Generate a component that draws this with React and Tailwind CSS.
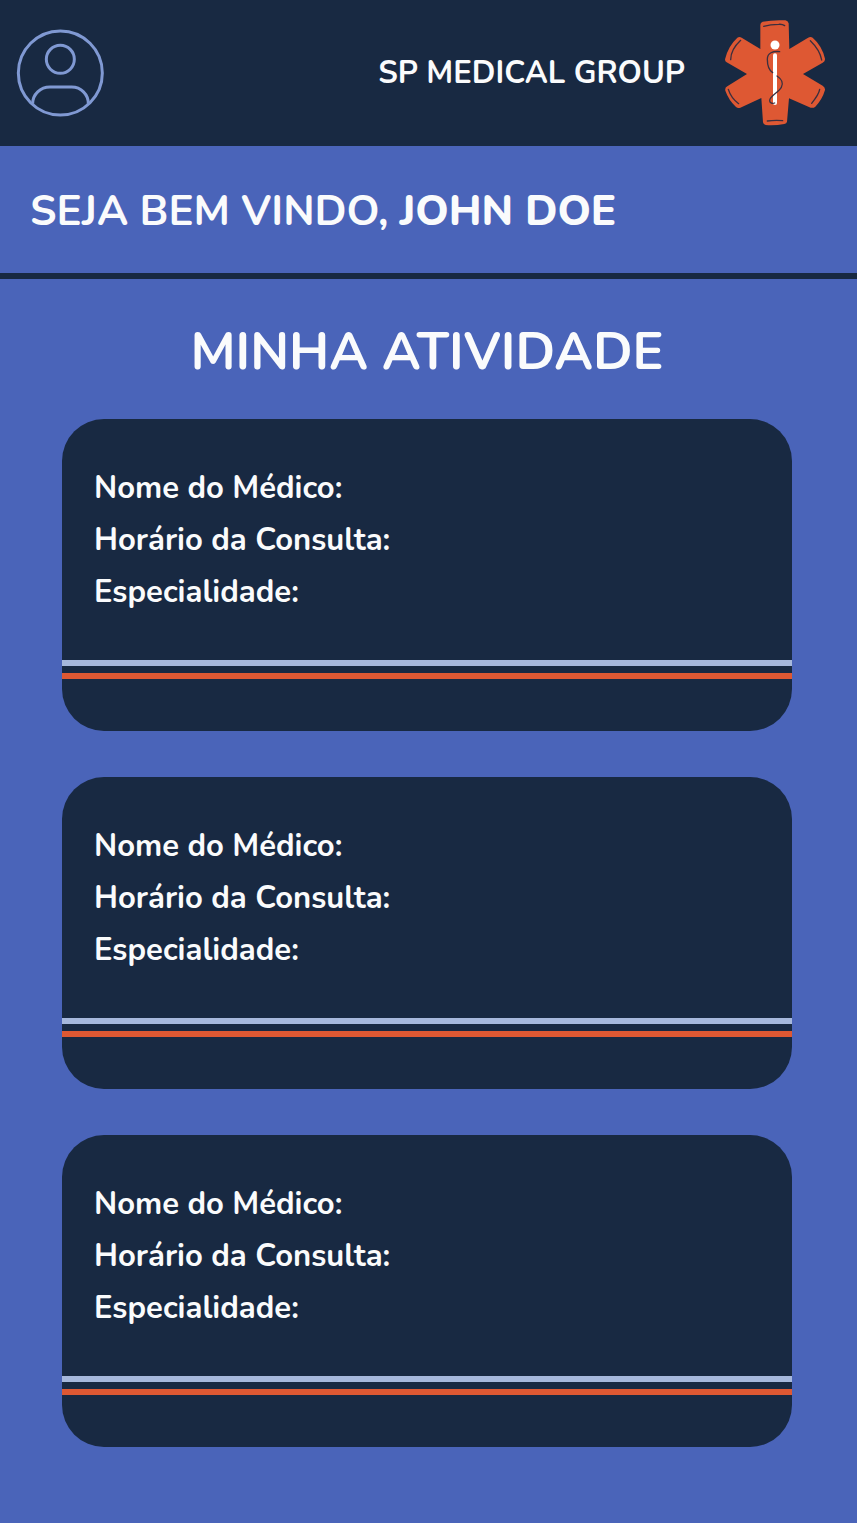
const fields = ["Nome do Médico:", "Horário da Consulta:", "Especialidade:"];
const appointments = [1, 2, 3];

function UserIcon() {
  return (
    <svg viewBox="0 0 264 264" className="size-[88px]" fill="none" stroke="#8099d3" strokeWidth="9" aria-hidden="true">
      <circle cx="133" cy="132" r="126" />
      <circle cx="133" cy="91" r="42" />
      <path d="M50 224C50 196 73 174 102 174H167C195 174 217 196 217 224" />
    </svg>
  );
}

function Logo() {
  return (
    <svg viewBox="0 0 360 375" className="w-[120px] h-[125px]" fill="none" role="img" aria-label="SP Medical Group">
      <path
        fill="#de5833"
        d="M136 45Q136 37 143 35Q174 29 211 31Q219 32 221 40L223 117L278 84Q286 79 293 83Q321 107 330 146Q331 154 323 158L264 192L323 227Q331 232 330 240Q322 268 301 290Q295 295 287 293L222 265L216 335Q215 341 208 342Q180 347 152 345Q145 344 144 337L139 264L76 293Q69 296 63 291Q41 270 31 242Q29 233 37 229L96 192L35 157Q28 153 31 145Q40 108 67 83Q73 79 80 83L136 117Z"
      />
      <g stroke="#3b2e3e" strokeWidth="4" strokeLinecap="round" strokeLinejoin="round">
        <path d="M146 49Q166 43 191 43Q202 42 209 47" />
        <path d="M77 91Q47 119 47 149" />
        <path d="M286 92Q315 120 320 150" />
        <path d="M40 238Q48 264 71 281" />
        <path d="M314 238Q312 252 290 280" />
        <path d="M157 333Q180 330 203 332" />
      </g>
      <circle cx="180" cy="105" r="13.5" fill="#fff" />
      <path d="M180 136V279" stroke="#fff" strokeWidth="12" strokeLinecap="round" />
      <path
        d="M194 125C174 123 157 128 157 148C157 169 162 181 173 188M186 198C200 207 206 220 199 232C190 248 165 257 164 271C163 278 171 282 179 279"
        stroke="#3b3040"
        strokeWidth="4"
        strokeLinecap="round"
      />
    </svg>
  );
}

function AppointmentCard() {
  return (
    <article className="flex flex-col overflow-hidden rounded-[42px] bg-[#182942] pt-[43px] pb-[52px]">
      <dl className="mb-[42px] px-8 text-[31px] leading-[52px] font-bold">
        {fields.map((field) => (
          <div key={field} className="flex gap-2">
            <dt>{field}</dt>
            <dd />
          </div>
        ))}
      </dl>
      <div className="h-[6px] bg-[#a6b8dc]" />
      <div className="mt-[7px] h-[6px] bg-[#de5833]" />
    </article>
  );
}

export default function App() {
  return (
    <div className="min-h-screen bg-[#4a64b9] font-['Nunito','Lato',sans-serif] text-[#fafbfc]">
      <header className="flex items-center justify-between bg-[#182942] pt-[10px] pr-[22px] pb-[11px] pl-4">
        <a href="#perfil" aria-label="Perfil">
          <UserIcon />
        </a>
        <div className="flex items-center gap-[30px]">
          <span className="text-[31px] leading-10 font-bold">SP MEDICAL GROUP</span>
          <Logo />
        </div>
      </header>
      <main>
        <p className="border-b-[6px] border-[#182942] px-[30px] pt-10 pb-[35px] text-[42px] leading-[52px] font-bold">
          SEJA BEM VINDO, <strong className="font-extrabold">JOHN DOE</strong>
        </p>
        <section className="pt-[41px] pr-[65px] pb-[75px] pl-[62px]">
          <h1 className="text-center text-[52px] leading-[64px] font-bold">MINHA ATIVIDADE</h1>
          <div className="mt-[35px] flex flex-col gap-[46px]">
            {appointments.map((id) => (
              <AppointmentCard key={id} />
            ))}
          </div>
        </section>
      </main>
    </div>
  );
}
